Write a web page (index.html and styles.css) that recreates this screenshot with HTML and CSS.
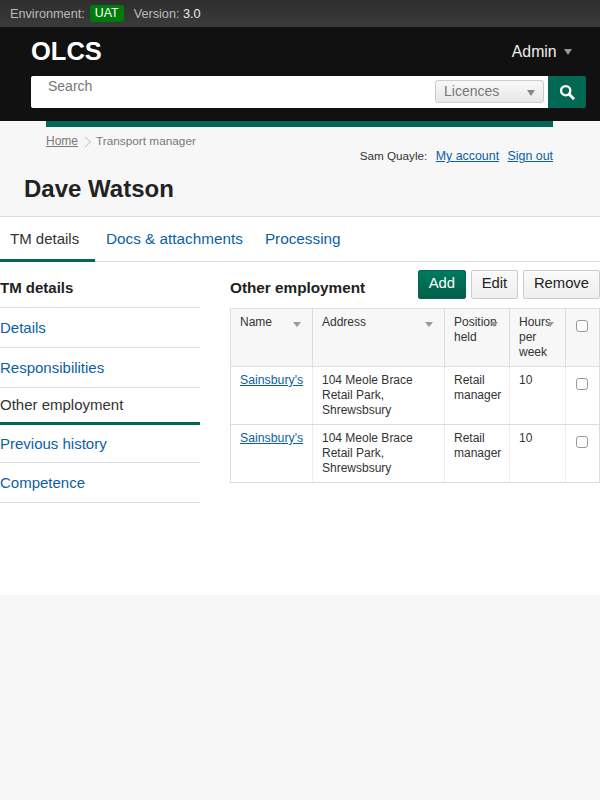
FILE: index.html
```html
<!DOCTYPE html>
<html lang="en">
<head>
    <meta charset="UTF-8">
    <title>OLCS - Dave Watson</title>
    <link rel="stylesheet" href="styles.css">
</head>
<body>
    <div class="env-bar">
        <span>Environment:</span>
        <span class="env-badge">UAT</span>
        <span class="env-version">Version: <b>3.0</b></span>
    </div>

    <header class="header">
        <div class="header-top">
            <div class="logo">OLCS</div>
            <div class="admin">Admin <i class="arrow arrow-admin"></i></div>
        </div>
        <form class="search">
            <div class="search-box">
                <span class="search-label">Search</span>
                <div class="search-select">Licences <i class="arrow"></i></div>
            </div>
            <div class="search-btn">
                <svg width="16" height="16" viewBox="0 0 18 18"><circle cx="7.5" cy="7.5" r="5.2" fill="none" stroke="#fff" stroke-width="2.6"/><path d="M11.4 11.4L16 16" stroke="#fff" stroke-width="3.2" stroke-linecap="round"/></svg>
            </div>
        </form>
    </header>

    <div class="masthead">
        <div class="green-bar"></div>
        <div class="crumbs">
            <a href="#">Home</a>
            <svg class="crumb-sep" width="8" height="12" viewBox="0 0 8 12"><path d="M1 1l5.5 5L1 11" fill="none" stroke="#bbb" stroke-width="1"/></svg>
            <span>Transport manager</span>
        </div>
        <div class="user-links">
            <span>Sam Quayle:</span>
            <a href="#">My account</a>
            <a href="#">Sign out</a>
        </div>
        <h1>Dave Watson</h1>
    </div>

    <main class="content">
        <nav class="tabs">
            <a class="tab tab-active" href="#">TM details</a>
            <a class="tab" href="#">Docs &amp; attachments</a>
            <a class="tab" href="#">Processing</a>
        </nav>

        <div class="columns">
            <aside class="side">
                <h3>TM details</h3>
                <a href="#">Details</a>
                <a href="#">Responsibilities</a>
                <a class="side-active" href="#">Other employment</a>
                <a href="#">Previous history</a>
                <a href="#">Competence</a>
            </aside>

            <section class="main">
                <div class="main-head">
                    <h3>Other employment</h3>
                    <div class="actions">
                        <button class="btn btn-green">Add</button>
                        <button class="btn btn-edit">Edit</button>
                        <button class="btn">Remove</button>
                    </div>
                </div>
                <table class="table">
                    <thead>
                        <tr>
                            <th class="col-name">Name<i class="arrow sort"></i></th>
                            <th class="col-address">Address<i class="arrow sort"></i></th>
                            <th class="col-position">Position held<i class="arrow sort"></i></th>
                            <th class="col-hours">Hours per week<i class="arrow sort"></i></th>
                            <th class="col-check"><input type="checkbox"></th>
                        </tr>
                    </thead>
                    <tbody>
                        <tr>
                            <td><a href="#">Sainsbury's</a></td>
                            <td>104 Meole Brace Retail Park, Shrewsbsury</td>
                            <td>Retail manager</td>
                            <td>10</td>
                            <td class="col-check"><input type="checkbox"></td>
                        </tr>
                        <tr>
                            <td><a href="#">Sainsbury's</a></td>
                            <td>104 Meole Brace Retail Park, Shrewsbsury</td>
                            <td>Retail manager</td>
                            <td>10</td>
                            <td class="col-check"><input type="checkbox"></td>
                        </tr>
                    </tbody>
                </table>
            </section>
        </div>
    </main>
</body>
</html>
```

FILE: styles.css
```css
body {
    margin: 0;
    background: #f7f7f7;
    color: #222;
    font-family: "Liberation Sans", Arial, sans-serif;
    font-size: 16px;
}

a {
    color: #0b5fa5;
}

.arrow {
    display: inline-block;
    width: 0;
    height: 0;
    border-left: 4.5px solid transparent;
    border-right: 4.5px solid transparent;
    border-top: 6px solid #999;
}

/* environment strip */
.env-bar {
    display: flex;
    align-items: center;
    height: 27px;
    padding-left: 10px;
    background: linear-gradient(#2e2e2e, #3b3b3b);
    color: #bbb;
    font-size: 12.7px;
}

.env-badge {
    margin-left: 5px;
    padding: 0 5px;
    height: 17px;
    line-height: 17px;
    border-radius: 2px;
    background: #007b0a;
    color: #fff;
    font-size: 12.4px;
}

.env-version {
    margin-left: 10px;
}

.env-version b {
    font-weight: normal;
    color: #eee;
}

/* black header */
.header {
    height: 94px;
    padding: 0 14px 0 31px;
    background: #111;
}

.header-top {
    display: flex;
    justify-content: space-between;
    align-items: center;
    height: 49px;
}

.logo {
    color: #fff;
    font-size: 25.5px;
    font-weight: bold;
}

.admin {
    margin-right: 14px;
    color: #eee;
    font-size: 15.8px;
}

.arrow-admin {
    margin-left: 3px;
    vertical-align: 2px;
}

.search {
    display: flex;
    height: 32px;
}

.search-box {
    position: relative;
    flex: 1;
    background: #fff;
    border-radius: 2px 0 0 2px;
}

.search-label {
    display: block;
    padding: 2px 0 0 17px;
    color: #777;
    font-size: 14px;
}

.search-select {
    position: absolute;
    top: 4px;
    right: 4px;
    box-sizing: border-box;
    width: 109px;
    height: 23px;
    padding-left: 8px;
    line-height: 21px;
    border: 1px solid #ccc;
    border-radius: 3px;
    background: linear-gradient(#f8f8f8, #e8e8e8);
    color: #777;
    font-size: 14px;
}

.search-select .arrow {
    position: absolute;
    top: 9px;
    right: 8px;
    border-top-color: #888;
}

.search-btn {
    display: flex;
    align-items: center;
    justify-content: center;
    width: 38px;
    background: #006853;
    border-radius: 0 2px 2px 0;
}

/* breadcrumbs and title */
.masthead {
    position: relative;
    height: 95px;
    border-bottom: 1px solid #ddd;
    padding-left: 46px;
}

.green-bar {
    width: 507px;
    height: 6px;
    background: #006853;
}

.crumbs {
    display: flex;
    align-items: center;
    margin-top: 7px;
    color: #777;
    font-size: 12px;
}

.crumbs a {
    color: #777;
}

.crumbs span {
    font-size: 11.8px;
}

.crumb-sep {
    margin: 1px 4px 0 6px;
}

.user-links {
    position: absolute;
    top: 28px;
    right: 47px;
    color: #333;
    font-size: 12.4px;
}

.user-links span {
    font-size: 11.7px;
}

.user-links a {
    margin-left: 5px;
}

.masthead h1 {
    margin: 26px 0 0 -22px;
    font-size: 24px;
    line-height: 30px;
}

/* white panel */
.content {
    height: 378px;
    background: #fff;
}

.tabs {
    display: flex;
    height: 44px;
    border-bottom: 1px solid #ddd;
}

.tab {
    box-sizing: border-box;
    height: 45px;
    padding: 13px 11px 0;
    font-size: 15.3px;
    text-decoration: none;
}

.tab-active {
    width: 95px;
    padding-left: 10px;
    border-bottom: 3px solid #006853;
    color: #333;
    font-size: 15px;
}

.columns {
    display: flex;
    gap: 30px;
}

/* side menu */
.side {
    width: 200px;
    font-size: 15px;
}

.side h3 {
    margin: 0;
    height: 45px;
    line-height: 51px;
    font-size: 15px;
    border-bottom: 1px solid #ddd;
}

.side a {
    display: block;
    height: 39px;
    line-height: 40px;
    border-bottom: 1px solid #ddd;
    text-decoration: none;
}

.side .side-active {
    height: 34px;
    line-height: 34px;
    border-bottom: 3px solid #006853;
    color: #333;
}

.side .side-active + a {
    height: 37px;
    line-height: 37px;
}

/* employment table */
.main {
    width: 370px;
}

.main-head {
    display: flex;
    justify-content: space-between;
    height: 46px;
}

.main-head h3 {
    margin: 0;
    line-height: 51px;
    font-size: 15.3px;
}

.actions {
    display: flex;
    gap: 5px;
    padding-top: 8px;
}

.btn {
    box-sizing: border-box;
    height: 29px;
    padding: 0 10px 4px;
    border: 1px solid #ccc;
    border-radius: 2px;
    background: linear-gradient(#fafafa, #eee);
    color: #222;
    font-family: inherit;
    font-size: 14.8px;
}

.btn-edit {
    width: 47px;
    padding: 0 0 4px;
}

.btn-green {
    width: 48px;
    padding: 0 0 4px;
    border-color: #006853;
    background: linear-gradient(#007b5f, #005f4b);
    color: #fff;
}

.table {
    width: 370px;
    table-layout: fixed;
    border-collapse: collapse;
    border: 1px solid #ddd;
    font-size: 12px;
    line-height: 15px;
    color: #333;
}

.table th,
.table td {
    padding: 6px 9px 0;
    height: 51px;
    vertical-align: top;
    text-align: left;
    font-weight: normal;
}

.table td a {
    font-size: 12.3px;
}

.table th {
    position: relative;
    background: #f7f7f7;
    border: 1px solid #ddd;
}

.table td {
    border-bottom: 1px solid #ddd;
    border-right: 1px dotted #ddd;
}

.col-name {
    width: 63px;
}

.col-address {
    width: 113px;
}

.col-position {
    width: 46px;
}

.col-hours {
    width: 37px;
}

.table .col-check {
    padding: 11px 2px 0 0;
    height: 46px;
    text-align: center;
}

.col-check input {
    appearance: none;
    display: block;
    box-sizing: border-box;
    margin: 0 auto;
    width: 12px;
    height: 12px;
    border: 1px solid #999;
    border-radius: 3px;
    background: #fff;
}

.sort {
    position: absolute;
    top: 13px;
    right: 11px;
    border-left-width: 4px;
    border-right-width: 4px;
    border-top-width: 5px;
}
```
